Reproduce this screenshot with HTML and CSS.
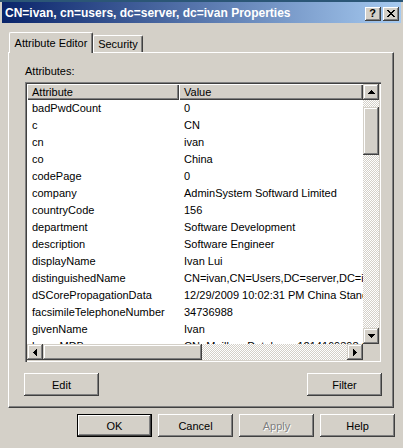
FILE: index.html
```html
<!DOCTYPE html>
<html>
<head>
<meta charset="utf-8">
<title>Properties</title>
<link rel="stylesheet" href="styles.css">
</head>
<body>
<div class="desktop-strip"></div>
<div class="window">
  <div class="titlebar">
    <span class="title">CN=ivan, cn=users, dc=server, dc=ivan Properties</span>
    <div class="caption-btns">
      <div class="cap-btn cap-help">?</div>
      <div class="cap-btn"><svg width="8" height="7" viewBox="0 0 8 7" shape-rendering="crispEdges"><path d="M0 0h2v1H0z M6 0h2v1H6z M1 1h2v1H1z M5 1h2v1H5z M2 2h4v1H2z M3 3h2v1H3z M2 4h4v1H2z M1 5h2v1H1z M5 5h2v1H5z M0 6h2v1H0z M6 6h2v1H6z" fill="#000"/></svg></div>
    </div>
  </div>
  <div class="client">
    <div class="tabs">
      <div class="tab tab-active">Attribute Editor</div>
      <div class="tab">Security</div>
    </div>
    <div class="panel">
      <div class="field-label">Attributes:</div>
      <div class="listbox">
        <div class="list-view">
          <div class="list-header">
            <div class="col-h col-attr">Attribute</div>
            <div class="col-h col-val">Value</div>
          </div>
          <div class="row"><span class="c-attr">badPwdCount</span><span class="c-val">0</span></div>
          <div class="row"><span class="c-attr">c</span><span class="c-val">CN</span></div>
          <div class="row"><span class="c-attr">cn</span><span class="c-val">ivan</span></div>
          <div class="row"><span class="c-attr">co</span><span class="c-val">China</span></div>
          <div class="row"><span class="c-attr">codePage</span><span class="c-val">0</span></div>
          <div class="row"><span class="c-attr">company</span><span class="c-val">AdminSystem Softward Limited</span></div>
          <div class="row"><span class="c-attr">countryCode</span><span class="c-val">156</span></div>
          <div class="row"><span class="c-attr">department</span><span class="c-val">Software Development</span></div>
          <div class="row"><span class="c-attr">description</span><span class="c-val">Software Engineer</span></div>
          <div class="row"><span class="c-attr">displayName</span><span class="c-val">Ivan Lui</span></div>
          <div class="row"><span class="c-attr">distinguishedName</span><span class="c-val">CN=ivan,CN=Users,DC=server,DC=ivan</span></div>
          <div class="row"><span class="c-attr">dSCorePropagationData</span><span class="c-val">12/29/2009 10:02:31 PM China Standard Time</span></div>
          <div class="row"><span class="c-attr">facsimileTelephoneNumber</span><span class="c-val">34736988</span></div>
          <div class="row"><span class="c-attr">givenName</span><span class="c-val">Ivan</span></div>
          <div class="row"><span class="c-attr">homeMDB</span><span class="c-val">CN=Mailbox Database 1214169398,CN=First Storage Group</span></div>
        </div>
        <div class="vscroll">
          <div class="sb-btn"><svg width="7" height="4" viewBox="0 0 7 4" shape-rendering="crispEdges"><path d="M3 0h1v1h1v1h1v1h1v1H0V3h1V2h1V1h1z" fill="#000"/></svg></div>
          <div class="sb-track sb-track-v"><div class="sb-thumb sb-thumb-v"></div></div>
          <div class="sb-btn"><svg width="7" height="4" viewBox="0 0 7 4" shape-rendering="crispEdges"><path d="M0 0h7v1H6v1H5v1H4v1H3V3H2V2H1V1H0z" fill="#000"/></svg></div>
        </div>
        <div class="hscroll">
          <div class="sb-btn"><svg width="4" height="7" viewBox="0 0 4 7" shape-rendering="crispEdges"><path d="M3 0h1v7H3V6H2V5H1V4H0V3h1V2h1V1h1z" fill="#000"/></svg></div>
          <div class="sb-track sb-track-h"><div class="sb-thumb sb-thumb-h"></div></div>
          <div class="sb-btn"><svg width="4" height="7" viewBox="0 0 4 7" shape-rendering="crispEdges"><path d="M0 0h1v1h1v1h1v1h1v1H3v1H2v1H1v1H0z" fill="#000"/></svg></div>
        </div>
        <div class="sb-corner"></div>
      </div>
      <div class="panel-actions">
        <button class="btn">Edit</button>
        <button class="btn">Filter</button>
      </div>
    </div>
    <div class="dialog-actions">
      <button class="btn btn-default">OK</button>
      <button class="btn">Cancel</button>
      <button class="btn" disabled>Apply</button>
      <button class="btn">Help</button>
    </div>
  </div>
</div>
</body>
</html>
```
FILE: styles.css
```css
html, body {
  margin: 0;
  padding: 0;
}
body {
  width: 403px;
  height: 448px;
  overflow: hidden;
  background: #d4d0c8;
  font-family: "Liberation Sans", Arial, sans-serif;
  font-size: 11px;
  color: #000;
}
.desktop-strip {
  height: 2px;
  background: #2b5676;
}
.window {
  padding: 0 2px;
}
.titlebar {
  height: 21px;
  display: flex;
  align-items: center;
  justify-content: space-between;
  background: linear-gradient(to right, #0a246a, #a6caf0);
  padding: 0 2px 0 3px;
}
.title {
  color: #fff;
  font-weight: bold;
  font-size: 12px;
  white-space: nowrap;
}
.caption-btns {
  display: flex;
  gap: 2px;
  margin-top: 2px;
}
.cap-btn {
  width: 16px;
  height: 14px;
  box-sizing: border-box;
  background: #d4d0c8;
  box-shadow: inset -1px -1px #404040, inset 1px 1px #fff, inset -2px -2px #808080;
  display: flex;
  align-items: center;
  justify-content: center;
  padding: 0 1px 1px 0;
}
.cap-help {
  font-weight: bold;
  font-size: 11px;
  line-height: 14px;
}
.client {
  padding: 9px 7px 0 6px;
}
.tabs {
  display: flex;
  align-items: flex-end;
  height: 20px;
  padding-left: 1px;
}
.tab {
  box-sizing: border-box;
  height: 17px;
  width: 50px;
  background: #d4d0c8;
  border-top: 1px solid #fff;
  border-left: 1px solid #fff;
  border-right: 1px solid #404040;
  box-shadow: inset -1px 0 #808080;
  border-radius: 2px 2px 0 0;
  display: flex;
  align-items: center;
  justify-content: center;
  white-space: nowrap;
}
.tab-active {
  width: 84px;
  height: 21px;
  margin-bottom: -1px;
  position: relative;
  z-index: 1;
  padding-bottom: 1px;
}
.panel {
  border-top: 1px solid #fff;
  border-left: 1px solid #fff;
  border-right: 1px solid #404040;
  border-bottom: 1px solid #404040;
  box-shadow: inset -1px -1px #808080;
  padding: 12px 11px 11px 16px;
}
.field-label {
  line-height: 13px;
  height: 13px;
}
.listbox {
  margin-top: 4px;
  width: 356px;
  height: 280px;
  box-sizing: border-box;
  padding: 2px;
  background: #fff;
  box-shadow: inset 1px 1px #808080, inset 2px 2px #404040, inset -1px -1px #fff, inset -2px -2px #d4d0c8;
  display: grid;
  grid-template-columns: 1fr 16px;
  grid-template-rows: 1fr 16px;
}
.list-view {
  overflow: hidden;
  background: #fff;
}
.list-header {
  display: flex;
  height: 16px;
}
.col-h {
  box-sizing: border-box;
  height: 16px;
  line-height: 16px;
  padding-left: 5px;
  background: #d4d0c8;
  box-shadow: inset 1px 1px #fff, inset -1px -1px #404040, inset -2px -2px #808080;
  white-space: nowrap;
}
.col-attr {
  width: 152px;
  flex: none;
}
.col-val {
  flex: 1;
}
.row {
  display: flex;
  height: 17px;
  line-height: 17px;
  white-space: nowrap;
}
.c-attr {
  width: 152px;
  flex: none;
  box-sizing: border-box;
  padding-left: 5px;
  overflow: hidden;
}
.c-val {
  padding-left: 5px;
}
.vscroll {
  display: flex;
  flex-direction: column;
}
.hscroll {
  display: flex;
}
.sb-btn {
  width: 16px;
  height: 16px;
  flex: none;
  box-sizing: border-box;
  background: #d4d0c8;
  box-shadow: inset -1px -1px #404040, inset 1px 1px #d4d0c8, inset -2px -2px #808080, inset 2px 2px #fff;
  display: flex;
  align-items: center;
  justify-content: center;
}
.sb-btn svg {
  display: block;
}
.sb-track {
  flex: 1;
  display: flex;
  background: repeating-conic-gradient(#fff 0 25%, #d4d0c8 0 50%) 0 0 / 2px 2px;
}
.sb-track-v {
  flex-direction: column;
}
.sb-thumb {
  box-sizing: border-box;
  background: #d4d0c8;
  box-shadow: inset -1px -1px #404040, inset 1px 1px #d4d0c8, inset -2px -2px #808080, inset 2px 2px #fff;
}
.sb-thumb-v {
  margin-top: 7px;
  height: 48px;
}
.sb-thumb-h {
  width: 159px;
}
.sb-corner {
  background: #d4d0c8;
}
.panel-actions {
  display: flex;
  justify-content: space-between;
  margin: 11px 0 0 -1px;
}
.btn {
  width: 75px;
  height: 23px;
  box-sizing: border-box;
  border: none;
  padding: 0;
  margin: 0;
  background: #d4d0c8;
  font-family: "Liberation Sans", Arial, sans-serif;
  font-size: 11px;
  color: #000;
  box-shadow: inset -1px -1px #404040, inset 1px 1px #fff, inset -2px -2px #808080, inset 2px 2px #d4d0c8;
}
.btn-default {
  box-shadow: inset 0 0 0 1px #000, inset -2px -2px #404040, inset 2px 2px #fff, inset -3px -3px #808080;
}
.btn:disabled {
  color: #808080;
  text-shadow: 1px 1px #fff;
}
.dialog-actions {
  display: flex;
  justify-content: flex-end;
  gap: 6px;
  margin: 6px -1px 0 0;
}
```
